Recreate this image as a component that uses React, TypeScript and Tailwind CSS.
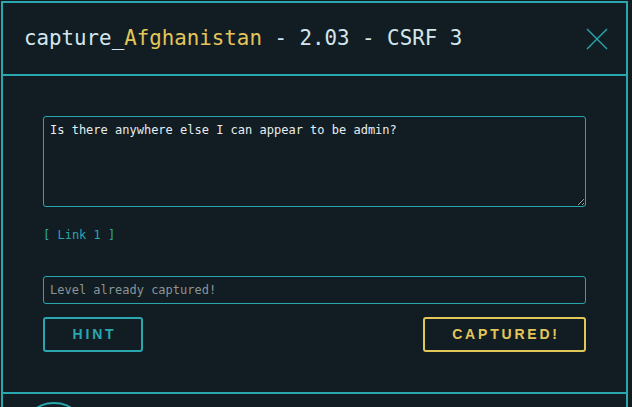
const mono = { fontFamily: '"DejaVu Sans Mono", "Liberation Mono", monospace' };
const sans = { fontFamily: '"Liberation Sans", Arial, sans-serif' };

export default function App() {
  return (
    <div className="min-h-screen bg-[#111b20] p-[1px]">
      <div className="w-[627px] border-2 border-[#2aa6ae] bg-[#121d23]">
        {/* Header */}
        <div className="flex h-[73px] items-center justify-between border-b-2 border-[#2aa6ae] pl-[21px] pr-[18px]">
          <h2 className="text-[20.8px] text-[#d3e6ee]" style={mono}>
            capture_<span className="text-[#e3c65a]">Afghanistan</span> - 2.03 - CSRF 3
          </h2>
          <svg width="22" height="22" viewBox="0 0 22 22" className="mt-[1px] text-[#2aa6ae]">
            <path d="M1 1 L21 21 M21 1 L1 21" stroke="currentColor" strokeWidth="1.4" fill="none" />
          </svg>
        </div>

        {/* Body */}
        <div className="px-10 pb-10 pt-10">
          <textarea
            readOnly
            className="block h-[91px] w-full resize-y rounded-[3px] border border-[#2aa6ae] bg-[#121d23] px-[6px] py-[5px] text-[12px] leading-[16px] text-[#e6eef0] outline-none"
            style={mono}
            defaultValue="Is there anywhere else I can appear to be admin?"
          />

          <div className="mt-[20px] h-[16px] text-[12px] leading-[16px] text-[#2aa6ae]" style={mono}>
            [ Link 1 ]
          </div>

          <input
            className="mt-[33px] block h-[28px] w-full rounded-[3px] border border-[#2aa6ae] bg-[#121d23] px-[6px] text-[12px] text-[#e6eef0] outline-none placeholder:text-[#8a9499]"
            style={mono}
            placeholder="Level already captured!"
          />

          <div className="mt-[13px] flex justify-between">
            <button
              className="h-[35px] w-[100px] rounded-[3px] border-2 border-[#2aa6ae] pl-[3px] text-[14px] font-bold tracking-[0.2em] text-[#2aa6ae]"
              style={sans}
            >
              HINT
            </button>
            <button
              className="h-[35px] w-[163px] rounded-[3px] border-2 border-[#e3c65a] pl-[3px] text-[14px] font-bold tracking-[0.2em] text-[#e3c65a]"
              style={sans}
            >
              CAPTURED!
            </button>
          </div>
        </div>

        {/* Footer */}
        <div className="h-[80px] border-t-2 border-[#2aa6ae] pl-[17px] pt-[8px]">
          <div className="h-[68px] w-[68px] rounded-full border-2 border-[#2aa6ae]" />
        </div>
      </div>
    </div>
  );
}
